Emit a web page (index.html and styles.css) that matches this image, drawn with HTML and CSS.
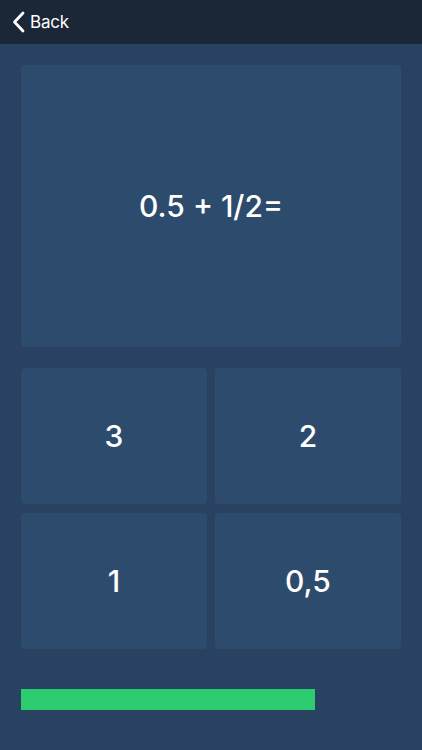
FILE: index.html
```html
<!DOCTYPE html>
<html lang="en">
<head>
    <meta charset="UTF-8">
    <meta name="viewport" content="width=device-width, initial-scale=1.0">
    <title>Quiz</title>
    <link rel="stylesheet" href="styles.css">
</head>
<body>
    <header class="topbar">
        <a class="voltar" href="#">
            <svg class="chevron" width="13" height="22" viewBox="0 0 13 22">
                <path d="M11 2 L2.5 11 L11 20" fill="none" stroke="#fff" stroke-width="2.8" stroke-linecap="round" stroke-linejoin="round"/>
            </svg>
            <span>Back</span>
        </a>
    </header>

    <main class="conteudo">
        <div class="pergunta">0.5 + 1/2=</div>

        <div class="respostas">
            <button class="resposta">3</button>
            <button class="resposta">2</button>
            <button class="resposta">1</button>
            <button class="resposta">0,5</button>
        </div>

        <div class="progresso">
            <div class="barra" style="width: 77.4%"></div>
        </div>
    </main>
</body>
</html>
```

FILE: styles.css
```css
*{
    margin: 0px;
    padding: 0px;
    box-sizing: border-box;
}

body{
    background-color: #2a4261;
    font-family: Inter, "Liberation Sans", Arial, sans-serif;
    color: white;
    height: 750px;
}

.topbar{
    background-color: #1b2637;
    height: 44px;
    display: flex;
    align-items: center;
    padding-left: 12px;
}

.voltar{
    display: flex;
    align-items: center;
    gap: 5px;
    color: white;
    text-decoration: none;
    font-size: 17px;
    letter-spacing: -0.2px;
}

.conteudo{
    padding: 21px;
}

.pergunta{
    background-color: #2d4b6c;
    height: 282px;
    border-radius: 4px;
    display: flex;
    align-items: center;
    justify-content: center;
    font-size: 30px;
    font-weight: 500;
}

.respostas{
    margin-top: 21px;
    display: grid;
    grid-template-columns: 1fr 1fr;
    grid-auto-rows: 136px;
    gap: 9px 8px;
}

.resposta{
    background-color: #2d4b6c;
    border: none;
    border-radius: 4px;
    color: white;
    font-family: inherit;
    font-size: 30px;
    font-weight: 500;
}

.progresso{
    margin-top: 40px;
    height: 21px;
}

.barra{
    height: 100%;
    background-color: #2ecc71;
}
```
